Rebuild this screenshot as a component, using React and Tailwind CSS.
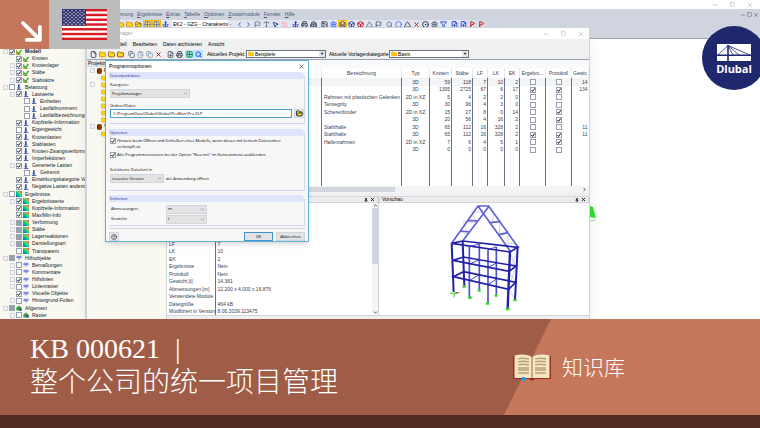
import React from 'react';
import {
  Anchor, ArrowLeftRight, Box, Building2, ChevronDown, ChevronLeft, ChevronRight, ChevronUp, Circle, CircleDot,
  ClipboardPaste, Copy, File, FilePlus, Filter, Flag, FlagTriangleRight, Folder, FolderOpen, Grid2x2, HelpCircle,
  Image, Layers, Minus, MousePointer2, Pin, Printer, Search, Settings, Square, Triangle, Type, X,
} from 'lucide-react';
import clsx from 'clsx';

// label, level, icon kind, check state, expandable
const NAVIGATOR = [
  ['Modell', 0, 'model', 'on', true],
  ['Knoten', 1, 'model', 'on'],
  ['Knotenlager', 1, 'model', 'on', true],
  ['Stäbe', 1, 'model', 'on', true],
  ['Stabsätze', 1, 'model', 'on', true],
  ['Belastung', 0, 'load', 'off', true],
  ['Lastwerte', 1, 'load', 'on', true],
  ['Einheiten', 2, 'load', 'off'],
  ['Lastfallnummern', 2, 'load', 'off'],
  ['Lastfallbezeichnungen', 2, 'load', 'off'],
  ['Kopfzeile-Information', 1, 'load', 'on'],
  ['Eigengewicht', 1, 'load', 'off'],
  ['Knotenlasten', 1, 'load', 'on'],
  ['Stablasten', 1, 'load', 'on'],
  ['Knoten-Zwangsverformungen', 1, 'load', 'on'],
  ['Imperfektionen', 1, 'load', 'on'],
  ['Generierte Lasten', 1, 'load', 'on', true],
  ['Getrennt', 2, 'load', 'off'],
  ['Einwirkungskategorie Vorzeichen', 1, 'load', 'on'],
  ['Negative Lasten andersfarbig', 1, 'load', 'on'],
  ['Ergebnisse', 0, 'result', 'off', true],
  ['Ergebniswerte', 1, 'result', 'on', true],
  ['Kopfzeile-Information', 1, 'result', 'on'],
  ['Max/Min-Info', 1, 'result', 'on'],
  ['Verformung', 1, 'result', 'mixed', true],
  ['Stäbe', 1, 'result', 'mixed', true],
  ['Lagerreaktionen', 1, 'result', 'mixed', true],
  ['Darstellungsart', 1, 'result', 'mixed', true],
  ['Transparent', 1, 'result', 'off'],
  ['Hilfsobjekte', 0, 'guide', 'mixed', true],
  ['Bemaßungen', 1, 'guide', 'off', true],
  ['Kommentare', 1, 'guide', 'off', true],
  ['Hilfslinien', 1, 'guide', 'on', true],
  ['Linienraster', 1, 'guide', 'off', true],
  ['Visuelle Objekte', 1, 'guide', 'on'],
  ['Hintergrund-Folien', 1, 'guide', 'off', true],
  ['Allgemein', 0, 'general', 'mixed', true],
  ['Raster', 1, 'general', 'off', true],
];

const INDENT = ['pl-[3px]', 'pl-[10px]', 'pl-[18px]'];

const MODELS = [
  ['', '3D', 59, 118, 7, 10, 2, false, false, '14'],
  ['', '3D', 1395, 2725, 67, 6, 17, true, true, '134'],
  ['Rahmen mit plastischen Gelenken', '2D in XZ', 5, 4, 2, 2, 0, false, false, ''],
  ['Tensegrity', '3D', 30, 96, 4, 3, 0, false, false, ''],
  ['Scherenbinder', '2D in XZ', 15, 27, 8, 0, 14, false, true, ''],
  ['', '3D', 20, 56, 4, 16, 2, false, true, ''],
  ['Stahlhalle', '3D', 65, 112, 16, 328, 2, false, false, '11'],
  ['Stahlhalle', '3D', 65, 112, 16, 328, 2, true, true, '11'],
  ['Hallenrahmen', '2D in XZ', 7, 6, 4, 5, 1, false, true, ''],
  ['', '3D', 0, 0, 0, 0, 0, false, false, ''],
];

const DETAILS = [
  ['LF', '7'],
  ['LK', '10'],
  ['EK', '2'],
  ['Ergebnisse', 'Nein'],
  ['Protokoll', 'Nein'],
  ['Gewicht [t]', '14.361'],
  ['Abmessungen [m]', '12.200 x 4.000 x 16.876'],
  ['Verwendete Module', ''],
  ['Dateigröße', '464 kB'],
  ['Modifiziert in Version', '8.06.3039.113475'],
];

const TOOL_GROUPS = [
  [[ChevronLeft, 'text-blue-700'], [ChevronRight, 'text-blue-700'], [Flag, 'text-slate-500'], [Type, 'text-slate-500'], [MousePointer2, 'text-blue-900'], [ArrowLeftRight, 'text-rose-300']],
  [[Anchor, 'text-blue-800'], [Printer, 'text-slate-700'], [Building2, 'text-slate-700']],
  [[Image, 'text-slate-700'], [Settings, 'text-blue-600'], [Layers, 'text-slate-700', true], [Box, 'text-blue-900'], [Box, 'text-red-700'], [Triangle, 'text-slate-500'], [Flag, 'text-slate-600']],
  [[Search, 'text-slate-500'], [Circle, 'text-indigo-500'], [Triangle, 'text-slate-700'], [X, 'text-red-700'], [CircleDot, 'text-blue-950'], [Settings, 'text-slate-700'], [Filter, 'text-blue-700']],
  [[FilePlus, 'text-blue-800'], [FilePlus, 'text-blue-700'], [FlagTriangleRight, 'text-red-700'], [FlagTriangleRight, 'text-red-700']],
];

const Check = ({ state = 'off', label, id }) => (
  <span className="grid w-[6px] h-[6px] shrink-0">
    <input
      type="checkbox"
      id={id}
      aria-label={label}
      defaultChecked={state === 'on'}
      className={clsx(
        'col-start-1 row-start-1 appearance-none w-[6px] h-[6px] border border-gray-400',
        state === 'mixed' ? 'bg-gray-400' : 'bg-white'
      )}
    />
    {state === 'on' && (
      <svg viewBox="0 0 6 6" className="col-start-1 row-start-1 w-[6px] h-[6px] pointer-events-none">
        <path d="M1.4 3 2.6 4.4 4.8 1.4" fill="none" stroke="#111" strokeWidth="1" />
      </svg>
    )}
  </span>
);

const NodeIcon = ({ kind }) => {
  if (kind === 'result') {
    return <span className="w-[6px] h-[6px] shrink-0 bg-linear-to-tr from-blue-700 via-green-400 to-red-500" />;
  }
  return (
    <svg viewBox="0 0 6 6" className="w-[6px] h-[6px] shrink-0">
      {kind === 'model' && (
        <>
          <path d="M.5 1v4.5H5" fill="none" stroke="#c9a227" strokeWidth="1" />
          <path d="M1 2.5 2.5 5 5.5.8" fill="none" stroke="#2aa02a" strokeWidth="1.3" />
        </>
      )}
      {kind === 'load' && (
        <>
          <path d="M2.8.3v3.4" stroke="#1e3a9a" strokeWidth="1.5" />
          <path d="M1 3.4h3.6L2.8 5.6z" fill="#3558b8" />
          <path d="M.8 5.6h4.6" stroke="#1e3a9a" strokeWidth=".8" />
        </>
      )}
      {kind === 'guide' && <path d="M.5.8h5v2.4H3.8L3 5.6l-.6-2.4H.5z" fill="#7d8bea" />}
      {kind === 'general' && (
        <>
          <path d="M.3 2.5 3 .4l2.5 2v3H.3z" fill="#37a13a" />
          <path d="M3.2 3.2h2.5v2.4H3.2z" fill="#2a55b5" />
        </>
      )}
    </svg>
  );
};

const Expander = ({ visible }) => (
  <span className={clsx('w-[5px] h-[5px] shrink-0 border border-gray-300', visible ? 'bg-gray-100' : 'invisible')} />
);

const Navigator = () => (
  <aside className="w-[86px] shrink-0 flex flex-col bg-[#f9f9f1] border-r border-gray-300 pt-[9px] overflow-hidden text-[5px] text-gray-900">
    {NAVIGATOR.map(([label, level, kind, state, expandable], i) => (
      <div key={i} className={clsx('flex-1 min-h-0 flex items-center gap-px', INDENT[level])}>
        <Expander visible={expandable} />
        <Check state={state} label={label} />
        <NodeIcon kind={kind} />
        <span className={clsx('whitespace-nowrap leading-none pl-[2px]', i === 0 && 'font-bold')}>{label}</span>
      </div>
    ))}
  </aside>
);

const WindowButtons = ({ className }) => (
  <div className={clsx('flex items-center text-gray-400', className)}>
    <button aria-label="Minimieren"><Minus className="w-[6px] h-[6px]" /></button>
    <button aria-label="Maximieren"><Square className="w-[5px] h-[5px]" /></button>
    <button aria-label="Schließen"><X className="w-[6px] h-[6px]" /></button>
  </div>
);

const Tool = ({ icon: Icon, color, active, filled }) => (
  <button
    aria-label="Werkzeug"
    className={clsx('w-[9px] h-[8px] shrink-0 flex items-center justify-center', color, active && 'bg-amber-200 border border-amber-400')}
  >
    <Icon className={clsx('w-[7px] h-[7px]', filled && 'fill-yellow-300')} strokeWidth={3} />
  </button>
);

const MainChrome = () => (
  <header className="shrink-0">
    <div className="h-[9px] bg-white flex justify-end pr-[7px]">
      <WindowButtons className="gap-[12px]" />
    </div>
    <div className="h-[30px] bg-[#d0d4de] border-b border-gray-400">
      <div className="h-[11px] flex items-center justify-between pl-[106px] pr-[1px]">
        <nav className="flex gap-[4px] text-[5px] leading-none text-gray-600">
          {['Berechnung', 'Ergebnisse', 'Extras', 'Tabelle', 'Optionen', 'Zusatzmodule', 'Fenster', 'Hilfe'].map((item) => (
            <button key={item} className="first-letter:underline">{item}</button>
          ))}
        </nav>
        <WindowButtons className="gap-px text-gray-600" />
      </div>
      <div className="h-[8px] flex items-center pl-[116px] bg-linear-to-r from-[#e2e6f0] from-60% to-[#d0d4de] to-65%">
        <Tool icon={Folder} color="text-yellow-600" filled />
        <Tool icon={Folder} color="text-yellow-600" filled />
        <Tool icon={FolderOpen} color="text-yellow-700" filled />
        <Tool icon={Grid2x2} color="text-slate-500" active />
        <Tool icon={Grid2x2} color="text-slate-500" active />
        <Tool icon={Anchor} color="text-blue-700" />
        <select aria-label="Lastfall" className="appearance-none w-[56px] h-[8px] ml-[2px] bg-white pl-px text-[5px] leading-none text-black">
          <option>EK2 - GZG - Charakteristisch</option>
        </select>
        <ChevronDown className="w-[5px] h-[5px] mr-[2px] text-gray-500" />
        {TOOL_GROUPS.map((group, i) => (
          <div key={i} className="flex mr-[2px]">
            {group.map(([icon, color, active], j) => (
              <Tool key={j} icon={icon} color={color} active={active} />
            ))}
          </div>
        ))}
      </div>
    </div>
  </header>
);

const ProjectTree = () => (
  <div className="w-[80px] shrink-0 flex flex-col bg-[#f9f9f1] border-r border-gray-300">
    <div className="h-[7px] bg-[#ececec] border-b border-gray-300 pl-px text-[5px] leading-[6px]">Projektmanager</div>
    <div className="pl-[3px] text-[5px] leading-none">
      {['P', '', '', '', '', '', '', '', 'V', ''].map((name, i) => (
        <div key={i} className="h-[7px] flex items-center gap-[2px]">
          <Expander visible={name || i === 2} />
          {name ? (
            <>
              <span className="w-[5px] h-[6px] rounded-xs bg-amber-800 border-l border-amber-950" />
              <span>{name}</span>
            </>
          ) : (
            <Folder className="w-[6px] h-[6px] ml-[4px] text-yellow-600 fill-yellow-300" />
          )}
        </div>
      ))}
    </div>
  </div>
);

const PanelHeader = ({ title }) => (
  <div className="h-[7px] shrink-0 bg-[#ececec] border border-gray-300 flex items-center justify-between px-[2px] text-[5px] leading-none">
    <span>{title}</span>
    <span className="flex gap-[2px]">
      <button aria-label="Anheften"><Pin className="w-[4px] h-[4px]" strokeWidth={4} /></button>
      <button aria-label="Schließen"><X className="w-[5px] h-[5px]" strokeWidth={4} /></button>
    </span>
  </div>
);

const ModelTable = () => (
  <div className="h-[118px] shrink-0 overflow-hidden bg-white">
    <table className="w-full h-full table-fixed border-collapse text-[5px] leading-none text-gray-700">
      <colgroup>
        <col />
        <col className="w-[80px]" />
        <col className="w-[28px]" />
        <col className="w-[22px]" />
        <col className="w-[21px]" />
        <col className="w-[15px]" />
        <col className="w-[17px]" />
        <col className="w-[15px]" />
        <col className="w-[26px]" />
        <col className="w-[26px]" />
        <col className="w-[17px]" />
      </colgroup>
      <thead>
        <tr className="h-[10px]">
          {['', 'Bezeichnung', 'Typ', 'Knoten', 'Stäbe', 'LF', 'LK', 'EK', 'Ergebni...', 'Protokoll', 'Gewic'].map((head, i) => (
            <th key={i} className="p-0 font-normal border-r border-gray-200 whitespace-nowrap overflow-hidden">{head}</th>
          ))}
        </tr>
      </thead>
      <tbody>
        {MODELS.map(([name, type, nodes, members, lf, lk, ek, results, report, weight], i) => (
          <tr key={i} className={clsx(i % 2 ? 'h-[7px]' : 'h-[8px]', i === 0 && 'bg-gray-100')}>
            <td className="p-0 border-r border-gray-500" />
            <td className="p-0 pl-[2px] border-r border-gray-500 whitespace-nowrap">{name}</td>
            <td className="p-0 border-r border-gray-500 text-center">{type}</td>
            {[nodes, members, lf, lk, ek].map((n, j) => (
              <td key={j} className="p-0 pr-px border-r border-gray-500 text-right">{n}</td>
            ))}
            {[results, report].map((on, j) => (
              <td key={j} className="p-0 border-r border-gray-500">
                <div className="flex justify-center"><Check state={on ? 'on' : 'off'} label={j ? 'Protokoll' : 'Ergebnisse'} /></div>
              </td>
            ))}
            <td className="p-0 pr-px text-right">{weight}</td>
          </tr>
        ))}
        <tr>
          {Array.from({ length: 11 }, (_, i) => (
            <td key={i} className={clsx('p-0', i < 10 && 'border-r border-gray-500')} />
          ))}
        </tr>
      </tbody>
    </table>
  </div>
);

const Preview = () => (
  <svg viewBox="60 39 624 336" className="w-full flex-1 min-h-0 bg-white">
    <g stroke="#aaa" strokeWidth="1.5" fill="none">
      <path d="M300 125 322 132 310 95 350 98 335 65 372 68M400 68 398 98 420 92 418 130 445 128 442 160 465 160" />
      <path d="M450 186 466 228 447 244 465 277 446 298 464 325M470 190 448 240 467 232 446 292" />
    </g>
    <g stroke="#5f5fdc" strokeWidth="5" fill="none">
      <path d="M275 160 354 48h32L473 170M308 153 386 50M354 48 450 182M301 123l29 3M324 91l30 2M392 98l29-4M418 134l27-6" />
    </g>
    <g stroke="#5050cc" strokeWidth="5" fill="none">
      <path d="M328 170v153M358 162v138M384 180v160M409 170v145" />
      <path d="M328 170l30-8M384 180l25-10M330 222l28-13M384 232l25-13M330 271l28-17M384 284l25-17" strokeWidth="3" />
    </g>
    <g stroke="#2020aa" strokeWidth="5" fill="none">
      <path d="M275 160 450 186 473 172 308 153zM279 211 448 244 468 228 310 201zM280 260 446 298 467 277 311 245z" />
      <path d="M275 160 281 306M308 153l5 135M473 170l-8 160" strokeWidth="6" />
      <path d="M450 182 443 354" strokeWidth="7" />
    </g>
    <g fill="#2fd62f">
      <path d="M308 286h9v7h-9zM325 319h10v8h-10zM353 298h9v7h-9zM378 337h10v7h-10zM404 313h9v7h-9zM438 353h11v8h-11zM460 327h10v7h-10z" />
      <path d="M270 308h24v3h-24zM281 308h3v14h-3z" />
    </g>
    <path d="M286 308h12" stroke="#d33" strokeWidth="3" />
  </svg>
);

const DetailPanel = () => (
  <section className="w-[212px] shrink-0 flex flex-col border-r border-gray-300">
    <PanelHeader />
    <div className="flex-1 flex bg-white">
      <table className="w-full mt-[37px] self-start table-fixed border-collapse text-[5px] leading-none text-gray-700">
        <tbody>
          {DETAILS.map(([key, value], i) => (
            <tr key={key} className={i % 2 ? 'h-[7px]' : 'h-[8px]'}>
              <th className="w-[48px] p-0 pl-[2px] font-normal text-left whitespace-nowrap border-r border-gray-500">{key}</th>
              <td className="p-0 pl-[2px]">{value}</td>
            </tr>
          ))}
        </tbody>
      </table>
      <div className="w-[6px] shrink-0 bg-gray-100 flex flex-col items-center">
        <ChevronUp className="w-[5px] h-[5px]" strokeWidth={3} />
        <span className="w-full h-[56px] bg-gray-300" />
        <ChevronDown className="w-[5px] h-[5px] mt-auto" strokeWidth={3} />
      </div>
    </div>
  </section>
);

const ToolbarSelect = ({ id, value }) => (
  <span className="w-[80px] h-[8px] flex items-center border border-gray-500 bg-white">
    <Folder className="w-[6px] h-[6px] ml-px text-yellow-500 fill-yellow-400" />
    <select id={id} className="appearance-none flex-1 min-w-0 h-[6px] pl-px text-[5px] leading-none">
      <option>{value}</option>
    </select>
    <span className="w-[6px] h-[6px] bg-gray-200 text-[4px] leading-[6px] text-center">▼</span>
  </span>
);

const ManagerWindow = () => (
  <section className="absolute left-[86px] right-[170px] top-[27px] bottom-0 flex flex-col bg-[#f0f0f0] border-x border-t border-gray-300 shadow-lg overflow-hidden">
    <div className="h-[11px] shrink-0 bg-white flex items-center justify-between pl-[10px] pr-[5px] text-[5px] text-gray-400">
      <span>Projektmanager</span>
      <WindowButtons className="gap-[12px]" />
    </div>
    <nav className="h-[10px] shrink-0 flex items-center gap-[6px] pl-[25px] text-[5px] leading-none">
      {['Modell', 'Bearbeiten', 'Daten archivieren', 'Ansicht'].map((item) => (
        <button key={item}>{item}</button>
      ))}
    </nav>
    <div className="h-[11px] shrink-0 flex items-center pl-[2px] text-[5px] leading-none border-b border-gray-400">
      <Tool icon={File} color="text-slate-700" />
      <Tool icon={Folder} color="text-yellow-600" filled />
      <Tool icon={Folder} color="text-yellow-700" filled />
      <Tool icon={Folder} color="text-amber-800" filled />
      <span className="w-[2px]" />
      <Tool icon={Copy} color="text-slate-500" />
      <Tool icon={ClipboardPaste} color="text-slate-400" />
      <Tool icon={Copy} color="text-slate-400" />
      <Tool icon={X} color="text-red-700" />
      <span className="w-[3px]" />
      <Tool icon={FilePlus} color="text-slate-600" />
      <Tool icon={Printer} color="text-slate-700" />
      <span className="flex ml-px bg-sky-200">
        <Tool icon={Grid2x2} color="text-green-700" />
        <Tool icon={Search} color="text-blue-700" />
      </span>
      <label htmlFor="projekt" className="w-[43px] pl-[4px] whitespace-nowrap">Aktuelles Projekt:</label>
      <ToolbarSelect id="projekt" value="Beispiele" />
      <label htmlFor="vorlage" className="w-[63px] pl-[3px] whitespace-nowrap">Aktuelle Vorlagenkategorie</label>
      <ToolbarSelect id="vorlage" value="Basis" />
    </div>
    <div className="flex-1 min-h-0 flex">
      <ProjectTree />
      <div className="flex-1 min-w-0 flex flex-col">
        <div className="h-[8px] shrink-0 bg-gray-50" />
        <ModelTable />
        <div className="h-[7px] shrink-0 bg-gray-100 flex items-center justify-between">
          <span className="w-[228px] h-[5px] bg-gray-300" />
          <ChevronRight className="w-[5px] h-[5px] mr-[2px]" strokeWidth={3} />
        </div>
        <div className="flex-1 min-h-0 mt-[3px] flex">
          <DetailPanel />
          <section className="flex-1 min-w-0 flex flex-col">
            <PanelHeader title="Vorschau" />
            <Preview />
          </section>
        </div>
        <div className="h-[4px] shrink-0 border-t border-gray-300" />
      </div>
    </div>
  </section>
);

const Group = ({ title, children, className }) => (
  <fieldset className="border-r border-b border-[#d5d8ee]">
    <legend className="w-full h-[7px] pl-px bg-[#dfe5fa] rounded-tr-sm leading-[7px] text-[#1b1b8f]">{title}</legend>
    <div className={clsx('pl-px', className)}>{children}</div>
  </fieldset>
);

const DialogSelect = ({ id, value, className }) => (
  <span className={clsx('h-[9px] flex items-center bg-[#e3e3e3] border border-gray-300', className)}>
    <select id={id} className="appearance-none flex-1 min-w-0 h-[7px] pl-px leading-none">
      <option>{value}</option>
    </select>
    <ChevronDown className="w-[5px] h-[5px] mr-px text-gray-600" />
  </span>
);

const OptionsDialog = () => (
  <section
    role="dialog"
    aria-label="Programmoptionen"
    className="absolute left-[105px] top-[60px] w-[204px] h-[182px] flex flex-col bg-[#f7f7f7] border border-[#62b1d6] shadow-md px-[3px] font-['Open_Sans',sans-serif] text-[4px] leading-none text-black"
  >
    <div className="h-[12px] -mx-[3px] px-[3px] bg-white flex items-center justify-between text-[5px] font-['Liberation_Sans',sans-serif]">
      <h2>Programmoptionen</h2>
      <button aria-label="Schließen"><X className="w-[7px] h-[7px]" /></button>
    </div>
    <Group title="Datenbankdatei" className="h-[44px] pt-[4px]">
      <label htmlFor="kategorie" className="block h-[6px]">Kategorie:</label>
      <DialogSelect id="kategorie" value="Projektmanager" className="w-[80px]" />
      <label htmlFor="datei" className="block h-[5px] mt-[6px]">Ordner/Datei:</label>
      <div className="flex gap-[2px]">
        <input
          id="datei"
          type="text"
          defaultValue="C:\ProgramData\Dlubal\Global\ProMan\Pro.DLP"
          className="w-[182px] h-[9px] px-[2px] bg-white border border-[#4a9fd0]"
        />
        <button aria-label="Durchsuchen" className="w-[10px] h-[9px] flex items-center justify-center bg-gray-200 border border-gray-300">
          <FolderOpen className="w-[7px] h-[7px] text-gray-900 fill-yellow-300" strokeWidth={3} />
        </button>
      </div>
    </Group>
    <div className="h-[5px]" />
    <Group title="Optionen" className="h-[54px] pt-[2px]">
      <div className="flex gap-px">
        <Check id="hinweis" state="on" />
        <label htmlFor="hinweis" className="leading-[6px]">
          Hinweis beim Öffnen und Schließen eines Modells, wenn dieses mit keinem Dateiordner
          <br />
          verknüpft ist
        </label>
      </div>
      <div className="flex gap-px mt-[2px]">
        <Check id="alte" state="on" />
        <label htmlFor="alte" className="leading-[6px]">Alte Programmversionen bei der Option "Neu mit" im Kontextmenü ausblenden</label>
      </div>
      <label htmlFor="version" className="block h-[6px] mt-[10px]">Selektierte Datei(en) in</label>
      <div className="flex items-center gap-[2px]">
        <DialogSelect id="version" value="neuester Version" className="w-[54px]" />
        <span>der Anwendung öffnen</span>
      </div>
    </Group>
    <div className="h-[4px]" />
    <Group title="Einheiten" className="h-[23px] pt-[2px]">
      {[['abmessungen', 'Abmessungen:', 'm'], ['gewicht', 'Gewicht:', 't']].map(([id, label, unit]) => (
        <div key={id} className="flex items-center h-[10px]">
          <label htmlFor={id} className="w-[56px] pl-px">{label}</label>
          <DialogSelect id={id} value={unit} className="w-[41px]" />
        </div>
      ))}
    </Group>
    <div className="mt-[2px] pt-[3px] border-t border-gray-300 flex gap-[3px]">
      <button aria-label="Hilfe" className="w-[10px] h-[9px] mr-auto flex items-center justify-center bg-gray-200 border border-gray-300">
        <HelpCircle className="w-[6px] h-[6px]" />
      </button>
      <button className="w-[29px] h-[9px] bg-[#e3e3e3] border border-[#3d94cc]">OK</button>
      <button className="w-[29px] h-[9px] bg-[#e3e3e3] border border-gray-300">Abbrechen</button>
    </div>
  </section>
);

const UsFlag = () => (
  <svg viewBox="0 0 45 31" className="w-[45px] h-[31px]">
    <rect width="45" height="31" fill="#fff" />
    {Array.from({ length: 7 }, (_, i) => (
      <rect key={i} y={i * 4.77} width="45" height="2.38" fill="#d81920" />
    ))}
    <rect width="24" height="16.7" fill="#33346f" />
    {Array.from({ length: 9 }, (_, row) =>
      Array.from({ length: row % 2 ? 5 : 6 }, (_, col) => (
        <circle key={`${row}-${col}`} cx={2 + col * 4 + (row % 2 ? 2 : 0)} cy={1.6 + row * 1.7} r="0.65" fill="#fff" />
      ))
    )}
  </svg>
);

const CornerTiles = () => (
  <div className="absolute left-0 top-0 flex h-[49px]">
    <div className="w-[49px] bg-[#c5775c] flex items-end justify-end pr-[7px] pb-[7px]">
      <svg viewBox="0 0 20 20" className="w-[21px] h-[21px]" fill="none" stroke="#fff" strokeWidth="3.6" strokeLinecap="round" strokeLinejoin="round">
        <path d="M2 2 17.5 17.5M18 5.5V18H5.5" />
      </svg>
    </div>
    <div className="w-[71px] bg-[#bcbcbc] flex items-center justify-center">
      <UsFlag />
    </div>
  </div>
);

const DlubalBadge = () => (
  <div className="absolute -right-[6px] top-[26px] w-16 h-16 rounded-full bg-[#20286d] flex flex-col items-center pt-[18px] text-white">
    <svg viewBox="0 0 34 17" className="w-[34px] h-[17px]">
      <rect width="34" height="17" fill="#fff" />
      <g stroke="#20286d" fill="none">
        <path d="M0 11.3h34" strokeWidth="1.6" />
        <path d="M11 1v16" strokeWidth="1.6" />
        <path d="M11 1.5 1 11M11 1.5 33 11M11 1.5 22 11M11 1.5 16 11" strokeWidth=".8" />
      </g>
    </svg>
    <span className="text-[11px] leading-[15px] font-bold font-['Open_Sans',sans-serif]">Dlubal</span>
  </div>
);

const BookIcon = () => (
  <svg viewBox="0 0 38 27" className="w-[38px] h-[27px]">
    <path d="M0 2h38v23H22q-3 3-6 0H0z" fill="#9c2b22" />
    <path d="M1.5 1.5Q11-1 18.5 2.5V24h-17zM36.500 1.500Q27-1 19.500 2.500V24h17z" fill="#f6e7c3" />
    <path d="M19 3v21" stroke="#d8c194" strokeWidth="1" />
    <g stroke="#b5a27a" strokeWidth="1.300" fill="none">
      <path d="M5 5q5-1.500 11 0M5 8q5-1.500 11 0M5 11q5-1.500 11 0M5 14h11M5 16h11M5 19h11" />
      <path d="M22 5q5-1.500 11 0M22 8q5-1.500 11 0M22 11q5-1.500 11 0M22 14h11M22 16h11M22 19h11" />
    </g>
    <path d="M9 23h3v4l-1.500-1L9 27z" fill="#1f9fe0" />
  </svg>
);

const Banner = () => (
  <footer className="shrink-0">
    <div className="relative h-24 flex bg-[#9f5d48] text-white">
      <div className="absolute inset-y-0 right-0 w-64 bg-[#c5775c] [clip-path:polygon(47px_0,100%_0,100%_100%,0_100%)]" />
      <h1 className="flex-1 pl-[30px] pt-[13px] text-[28px] leading-[34px] font-light font-['Liberation_Serif','Noto_Sans_CJK_SC',serif]">
        KB 000621 <span className="pl-2">|</span>
        <br />
        整个公司的统一项目管理
      </h1>
      <div className="relative w-[247px] flex items-center gap-[11px]">
        <BookIcon />
        <span className="text-[21px] font-light font-['Noto_Sans_CJK_SC',sans-serif]">知识库</span>
      </div>
    </div>
    <div className="h-[13px] bg-[#522b20]" />
  </footer>
);

export default function App() {
  return (
    <main className="flex flex-col h-screen overflow-hidden bg-white font-['Liberation_Sans','Noto_Sans_CJK_SC',sans-serif]">
      <div className="relative flex-1 min-h-0 flex flex-col overflow-hidden">
        <MainChrome />
        <div className="flex-1 min-h-0 flex">
          <Navigator />
          <svg viewBox="0 0 8 18" className="w-[8px] h-[18px] ml-auto mr-[162px] mt-[167px]">
            <path d="M0 0 3 1 6 12 0 11z" fill="#2fe02f" />
            <path d="M0 15 6 14" stroke="#8be88b" strokeWidth="1" />
          </svg>
        </div>
        <ManagerWindow />
        <OptionsDialog />
        <CornerTiles />
        <DlubalBadge />
      </div>
      <Banner />
    </main>
  );
}
